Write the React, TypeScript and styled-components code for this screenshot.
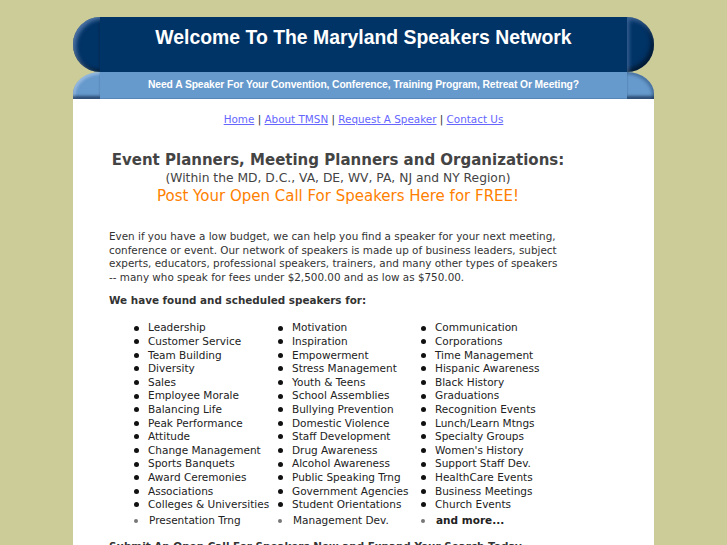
import { ReactElement } from 'react';
import styled, { createGlobalStyle } from 'styled-components';

const GlobalStyle = createGlobalStyle`
  html, body {
    margin: 0;
    padding: 0;
    background: #cccc99;
  }
`;

const Page = styled.div`
  width: 581px;
  margin: 17px auto 0;
`;

const Band = styled.div<{ $height: number; $color: string }>`
  display: flex;
  height: ${(p) => p.$height}px;
  color: #fff;
  font-family: 'Liberation Sans', Arial, sans-serif;
  font-weight: 700;

  & > * {
    background: ${(p) => p.$color};
  }
`;

const TitleCap = styled.div<{ $side: 'left' | 'right' }>`
  flex: none;
  width: 27px;
  border-radius: ${(p) => (p.$side === 'left' ? '28px 0 0 28px' : '0 28px 28px 0')};
  box-shadow: ${(p) =>
    p.$side === 'left'
      ? 'inset 3px 2px 4px rgba(130, 160, 210, 0.6), inset 0 -3px 3px rgba(0, 0, 0, 0.4)'
      : 'inset 2px 3px 4px rgba(130, 160, 210, 0.45), inset -3px -3px 4px rgba(0, 0, 0, 0.5)'};
`;

const SubCap = styled.div<{ $side: 'left' | 'right' }>`
  flex: none;
  width: 27px;
  border-radius: ${(p) => (p.$side === 'left' ? '27px 0 0 0 / 22px 0 0 0' : '0 27px 0 0 / 0 22px 0 0')};
  box-shadow: inset 0 -4px 3px -1px rgba(20, 45, 80, 0.7),
    ${(p) => (p.$side === 'left' ? 'inset 2px 2px 3px rgba(200, 220, 245, 0.5)' : 'inset -2px 2px 3px rgba(30, 60, 100, 0.4)')};
`;

const TitleText = styled.div`
  flex: 1;
  text-align: center;
  padding-top: 9px;
  font-size: 19.4px;
  line-height: 22px;
  white-space: nowrap;
`;

const SubText = styled.div`
  flex: 1;
  display: flex;
  justify-content: center;
  align-items: center;
  padding-bottom: 2px;
  font-size: 10.3px;
  letter-spacing: -0.1px;
  white-space: nowrap;
  box-shadow: inset 0 -1px 0 rgba(40, 80, 130, 0.25);
`;

const Content = styled.div`
  background: #fff;
  padding-top: 13px;
  height: 446px;
  overflow: hidden;
  font-family: 'DejaVu Sans', Verdana, sans-serif;
  color: #333;
`;

const Nav = styled.div`
  text-align: center;
  font-size: 10.4px;
  line-height: 14px;
  color: #333;

  a {
    color: #6666ff;
    text-decoration: underline;
  }
`;

const Body = styled.div`
  padding: 0 87px 0 36px;
`;

const Intro = styled.div`
  margin-top: 25px;
  text-align: center;
  color: #444;
`;

const Heading = styled.div`
  font-size: 15px;
  line-height: 18px;
  font-weight: 700;
  white-space: nowrap;
`;

const Region = styled.div`
  font-size: 12.3px;
  line-height: 18px;
`;

const Callout = styled.div`
  font-size: 15px;
  line-height: 18px;
  color: #ff8000;
`;

const Paragraph = styled.p`
  margin: 25px 0 0;
  font-size: 10.4px;
  line-height: 13.6px;
  color: #333;
  white-space: nowrap;
`;

const Lead = styled.div`
  margin-top: 9px;
  font-size: 10.4px;
  line-height: 14px;
  font-weight: 700;
  color: #333;
`;

const Columns = styled.div`
  display: grid;
  grid-template-columns: 144px 143px 140px;
  margin: 14px 0 0 39px;
`;

const List = styled.ul`
  margin: 0;
  padding: 0;
  list-style: none;
`;

const Item = styled.li<{ $last?: boolean }>`
  display: flex;
  align-items: center;
  font-size: 10.5px;
  line-height: 13.6px;
  color: #222;
  white-space: nowrap;
  margin-top: ${(p) => (p.$last ? '2.4px' : '0')};

  &::before {
    content: '';
    flex: none;
    width: ${(p) => (p.$last ? '4px' : '5px')};
    height: ${(p) => (p.$last ? '4px' : '5px')};
    border-radius: 50%;
    background: ${(p) => (p.$last ? '#777' : '#111')};
    margin: 0 ${(p) => (p.$last ? '11px' : '9px')} 0 -14px;
  }
`;

const More = styled.b`
  font-weight: 700;
`;

const Submit = styled.div`
  margin-top: 11px;
  font-size: 10.4px;
  line-height: 14px;
  font-weight: 700;
  color: #333;
  white-space: nowrap;
`;

const col1 = [
  'Leadership',
  'Customer Service',
  'Team Building',
  'Diversity',
  'Sales',
  'Employee Morale',
  'Balancing Life',
  'Peak Performance',
  'Attitude',
  'Change Management',
  'Sports Banquets',
  'Award Ceremonies',
  'Associations',
  'Colleges & Universities',
];

const col2 = [
  'Motivation',
  'Inspiration',
  'Empowerment',
  'Stress Management',
  'Youth & Teens',
  'School Assemblies',
  'Bullying Prevention',
  'Domestic Violence',
  'Staff Development',
  'Drug Awareness',
  'Alcohol Awareness',
  'Public Speaking Trng',
  'Government Agencies',
  'Student Orientations',
];

const col3 = [
  'Communication',
  'Corporations',
  'Time Management',
  'Hispanic Awareness',
  'Black History',
  'Graduations',
  'Recognition Events',
  'Lunch/Learn Mtngs',
  'Specialty Groups',
  "Women's History",
  'Support Staff Dev.',
  'HealthCare Events',
  'Business Meetings',
  'Church Events',
];

const App = (): ReactElement => {
  return (
    <>
      <GlobalStyle />
      <Page>
        <Band $height={55} $color="#003366">
          <TitleCap $side="left" />
          <TitleText>Welcome To The Maryland Speakers Network</TitleText>
          <TitleCap $side="right" />
        </Band>
        <Band $height={27} $color="#6699cc">
          <SubCap $side="left" />
          <SubText>
            Need A Speaker For Your Convention, Conference, Training Program, Retreat Or Meeting?
          </SubText>
          <SubCap $side="right" />
        </Band>
        <Content>
          <Nav>
            <a href="#">Home</a> | <a href="#">About TMSN</a> |{' '}
            <a href="#">Request A Speaker</a> | <a href="#">Contact Us</a>
          </Nav>
          <Body>
            <Intro>
              <Heading>Event Planners, Meeting Planners and Organizations:</Heading>
              <Region>(Within the MD, D.C., VA, DE, WV, PA, NJ and NY Region)</Region>
              <Callout>Post Your Open Call For Speakers Here for FREE!</Callout>
            </Intro>
            <Paragraph>
              Even if you have a low budget, we can help you find a speaker for your next meeting,
              <br />
              conference or event. Our network of speakers is made up of business leaders, subject
              <br />
              experts, educators, professional speakers, trainers, and many other types of speakers
              <br />
              -- many who speak for fees under $2,500.00 and as low as $750.00.
            </Paragraph>
            <Lead>We have found and scheduled speakers for:</Lead>
            <Columns>
              <List>
                {col1.map((t) => (
                  <Item key={t}>{t}</Item>
                ))}
                <Item $last>Presentation Trng</Item>
              </List>
              <List>
                {col2.map((t) => (
                  <Item key={t}>{t}</Item>
                ))}
                <Item $last>Management Dev.</Item>
              </List>
              <List>
                {col3.map((t) => (
                  <Item key={t}>{t}</Item>
                ))}
                <Item $last>
                  <More>and more...</More>
                </Item>
              </List>
            </Columns>
            <Submit>Submit An Open Call For Speakers Now and Expand Your Search Today</Submit>
          </Body>
        </Content>
      </Page>
    </>
  );
};

export default App;
